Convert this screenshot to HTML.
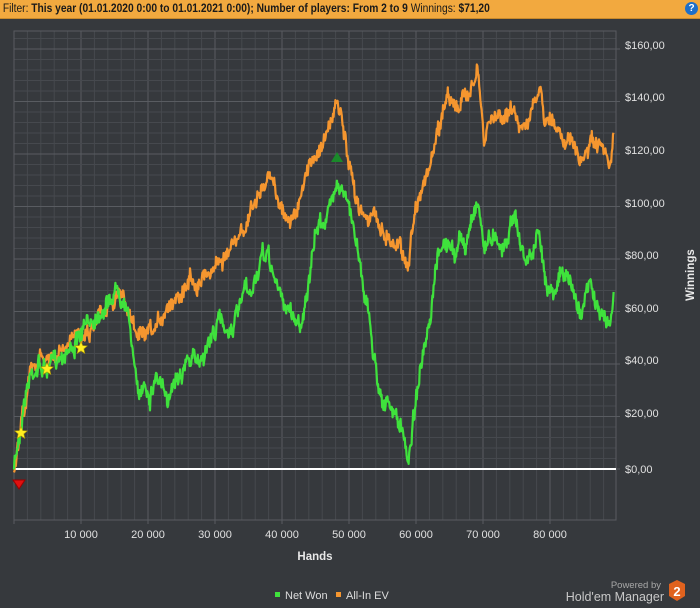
<!DOCTYPE html>
<html><head><meta charset="utf-8"><style>
html,body{margin:0;padding:0;width:700px;height:608px;overflow:hidden;background:#36393d;font-family:"Liberation Sans",sans-serif}
#hdr{position:absolute;left:0;top:0;width:700px;height:18px;background:#f2a93f;border-bottom:1px solid #c98a2c;font-size:11.5px;line-height:18px;color:#1a1a1a;white-space:nowrap}
#hdr span{display:inline-block;transform:scaleX(0.89);transform-origin:0 0}
#help{position:absolute;left:685px;top:2px;width:13px;height:13px;border-radius:50%;background:#1e6fc8;color:#fff;font-size:10px;line-height:13px;text-align:center;font-weight:bold}
svg{position:absolute;left:0;top:0}
</style></head><body>
<div id="hdr"><span>&nbsp;Filter: <b>This year (01.01.2020 0:00 to 01.01.2021 0:00); Number of players: From 2 to 9</b> Winnings: <b>$71,20</b></span></div>
<div id="help">?</div>
<svg id="s" width="700" height="608" xmlns="http://www.w3.org/2000/svg">
<g id="grid"></g>
<line x1="14" y1="469" x2="616" y2="469" stroke="#fff" stroke-width="2"/>
<path id="or" fill="none" stroke="#f5962f" stroke-width="2.2" stroke-linejoin="round"/>
<path id="gr" fill="none" stroke="#3fe23c" stroke-width="2.2" stroke-linejoin="round"/>
<polygon points="13,480 25,480 19,489" fill="#e01010" stroke="#900" stroke-width="1"/>
<polygon points="331,162 343,162 337,152" fill="#1a8a2a"/>
<g id="stars" fill="#ffee20" stroke="#b8a000" stroke-width="0.6"></g>
<g font-size="11" fill="#e0e0e0">
<text x="625" y="49">$160,00</text><text x="625" y="101">$140,00</text><text x="625" y="154">$120,00</text>
<text x="625" y="207">$100,00</text><text x="625" y="259">$80,00</text><text x="625" y="312">$60,00</text>
<text x="625" y="364">$40,00</text><text x="625" y="417">$20,00</text><text x="625" y="473">$0,00</text>
<g text-anchor="middle"><text x="81" y="538">10 000</text><text x="148" y="538">20 000</text><text x="215" y="538">30 000</text><text x="282" y="538">40 000</text><text x="349" y="538">50 000</text><text x="416" y="538">60 000</text><text x="483" y="538">70 000</text><text x="550" y="538">80 000</text></g>
</g>
<text x="315" y="560" font-size="11.5" font-weight="bold" fill="#e8e8e8" text-anchor="middle">Hands</text>
<text transform="translate(694,275) rotate(-90)" font-size="11.5" font-weight="bold" fill="#e8e8e8" text-anchor="middle">Winnings</text>
<rect x="275" y="592" width="5" height="5" fill="#3fe23c"/><text x="285" y="599" font-size="11" fill="#ddd">Net Won</text>
<rect x="336" y="592" width="5" height="5" fill="#f5962f"/><text x="346" y="599" font-size="11" fill="#ddd">All-In EV</text>
<text x="661" y="588" font-size="9.5" fill="#a8a8a8" text-anchor="end">Powered by</text>
<text x="664" y="601" font-size="12.5" fill="#c8c8c8" text-anchor="end">Hold'em Manager</text>
<polygon points="677,580 685,584 685,596 677,601 669,596 669,584" fill="#e0621e"/>
<text x="677" y="596" font-size="13" font-weight="bold" fill="#fff" text-anchor="middle">2</text>
</svg>
<script>
var g=document.getElementById('grid'),h='';
for(var i=0;i<=45;i++){var x=14+i*13.4;if(x>616)break;var maj=i%5==0;h+='<line x1="'+x+'" y1="31" x2="'+x+'" y2="'+(maj?524:520)+'" stroke="'+(maj?'#595c61':'#46494e')+'" stroke-width="1"/>';}
for(var j=0;j<=47;j++){var y=469-j*10.5;if(y<31)break;var maj=j%5==0;h+='<line x1="14" y1="'+y+'" x2="'+(maj?620:616)+'" y2="'+y+'" stroke="'+(maj?'#595c61':'#46494e')+'" stroke-width="1"/>';}
h+='<rect x="14" y="31" width="602" height="489" fill="none" stroke="#595c61"/>';
g.innerHTML=h;
var seed=7;function r(){seed=(seed*16807)%2147483647;return seed/2147483647;}
function mk(p,amp){var d='',n=0;for(var k=0;k<p.length-1;k++){var a=p[k],b=p[k+1];for(var x=a[0];x<b[0];x+=0.6){var t=(x-a[0])/(b[0]-a[0]);n=n*0.8+(r()-0.5)*amp;var y=a[1]+(b[1]-a[1])*t+n+(r()-0.5)*amp*1.3;d+=(d?'L':'M')+x.toFixed(1)+','+y.toFixed(1);}}return d;}
var G=[[14,469],[16,455],[20,430],[24,400],[30,375],[38,365],[47,370],[55,360],[65,350],[75,345],[82,335],[90,320],[100,310],[110,300],[118,285],[125,300],[132,340],[138,400],[145,380],[150,395],[156,375],[162,385],[167,410],[172,380],[180,370],[190,360],[200,360],[210,340],[220,320],[230,330],[240,310],[245,290],[250,300],[255,280],[262,260],[268,255],[275,280],[282,300],[290,310],[300,325],[310,280],[316,230],[322,220],[328,215],[332,200],[337,175],[340,185],[345,195],[350,215],[357,240],[362,275],[368,310],[373,350],[378,380],[385,405],[392,410],[400,425],[408,460],[412,430],[418,380],[425,350],[430,330],[435,280],[440,245],[448,245],[455,260],[460,230],[465,255],[470,225],[475,205],[478,200],[484,245],[490,240],[496,230],[503,250],[510,225],[515,210],[520,245],[526,260],[532,255],[538,235],[545,275],[552,290],[560,275],[570,280],[575,300],[580,310],[585,300],[590,285],[598,310],[605,320],[610,325],[614,290]];
var O=[[14,469],[20,430],[30,375],[40,360],[55,360],[70,345],[80,330],[90,330],[100,310],[110,300],[118,290],[125,305],[135,330],[145,340],[155,335],[160,320],[165,310],[172,300],[180,290],[190,280],[200,280],[210,270],[220,260],[230,250],[240,240],[248,220],[255,200],[262,190],[270,180],[275,185],[282,210],[290,220],[300,205],[310,160],[318,150],[325,140],[330,125],[337,105],[342,120],[348,165],[355,195],[362,210],[370,215],[380,225],[390,240],[400,245],[408,265],[412,230],[418,195],[425,180],[432,160],[440,125],[448,90],[458,110],[465,100],[472,80],[478,75],[484,145],[490,120],[500,115],[510,110],[520,125],[530,115],[540,95],[545,120],[555,125],[565,135],[575,150],[580,165],[590,145],[600,150],[610,170],[614,130]];
document.getElementById('gr').setAttribute('d',mk(G,9));
document.getElementById('or').setAttribute('d',mk(O,9));
function star(cx,cy,R){var s='';for(var i=0;i<10;i++){var rr=i%2?R*0.45:R,a=-Math.PI/2+i*Math.PI/5;s+=(cx+rr*Math.cos(a)).toFixed(1)+','+(cy+rr*Math.sin(a)).toFixed(1)+' ';}return '<polygon points="'+s+'"/>';}
document.getElementById('stars').innerHTML=star(21,433,6.5)+star(47,369,6.5)+star(81,348,6.5);
</script>
</body></html>
